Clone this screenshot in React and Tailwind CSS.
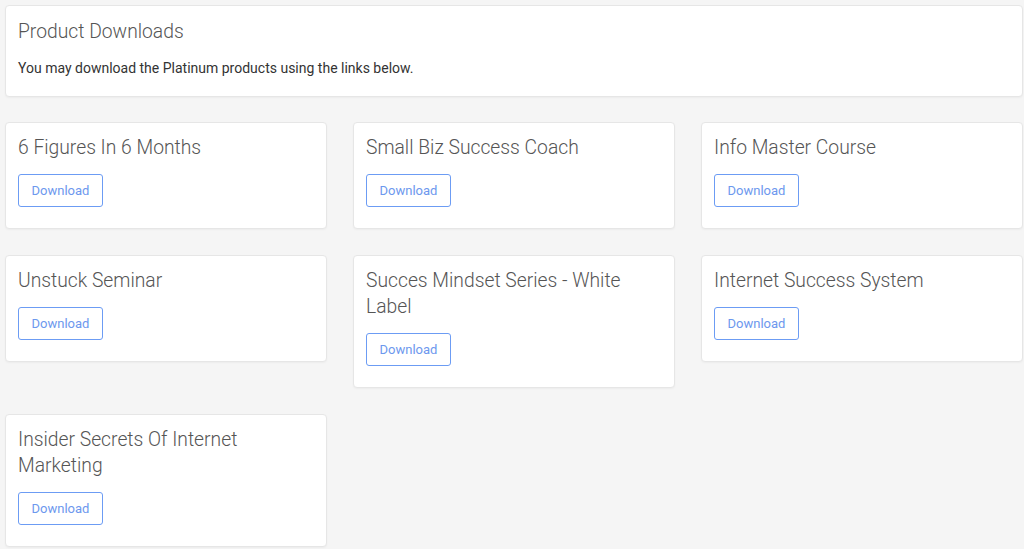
import React from 'react';

const products = [
  '6 Figures In 6 Months',
  'Small Biz Success Coach',
  'Info Master Course',
  'Unstuck Seminar',
  'Succes Mindset Series - White Label',
  'Internet Success System',
  'Insider Secrets Of Internet Marketing',
];

const ProductCard = ({ title }) => (
  <div className="bg-white border border-[#e6e6e6] rounded-[4px] shadow-[0_1px_2px_rgba(0,0,0,0.04)] px-[12px] pt-[12px] pb-[21px]">
    <h3 className="text-[19.3px] leading-[26px] font-light text-[#555] pr-10">{title}</h3>
    <button className="mt-[13px] h-[33px] w-[85px] border border-[#6c9cf4] rounded-[3px] text-[13px] text-[#6d98ee] bg-white">
      Download
    </button>
  </div>
);

const App = () => {
  return (
    <div
      className="min-h-screen bg-[#f5f5f5] pl-[5px] pr-[1px] pt-[5px] pb-[2px]"
      style={{ fontFamily: 'Roboto, "Liberation Sans", sans-serif' }}
    >
      <div className="bg-white border border-[#e6e6e6] rounded-[4px] shadow-[0_1px_2px_rgba(0,0,0,0.04)] px-[12px] pt-[14px] pb-[18px]">
        <h2 className="text-[19.3px] leading-[24px] font-light text-[#555]">Product Downloads</h2>
        <p className="mt-[14px] text-[14px] leading-[20px] text-[#333]">
          You may download the Platinum products using the links below.
        </p>
      </div>
      <div className="grid grid-cols-3 gap-x-[26px] gap-y-[26px] mt-[25px] items-start">
        {products.map((p) => (
          <ProductCard key={p} title={p} />
        ))}
      </div>
    </div>
  );
};

export default App;
